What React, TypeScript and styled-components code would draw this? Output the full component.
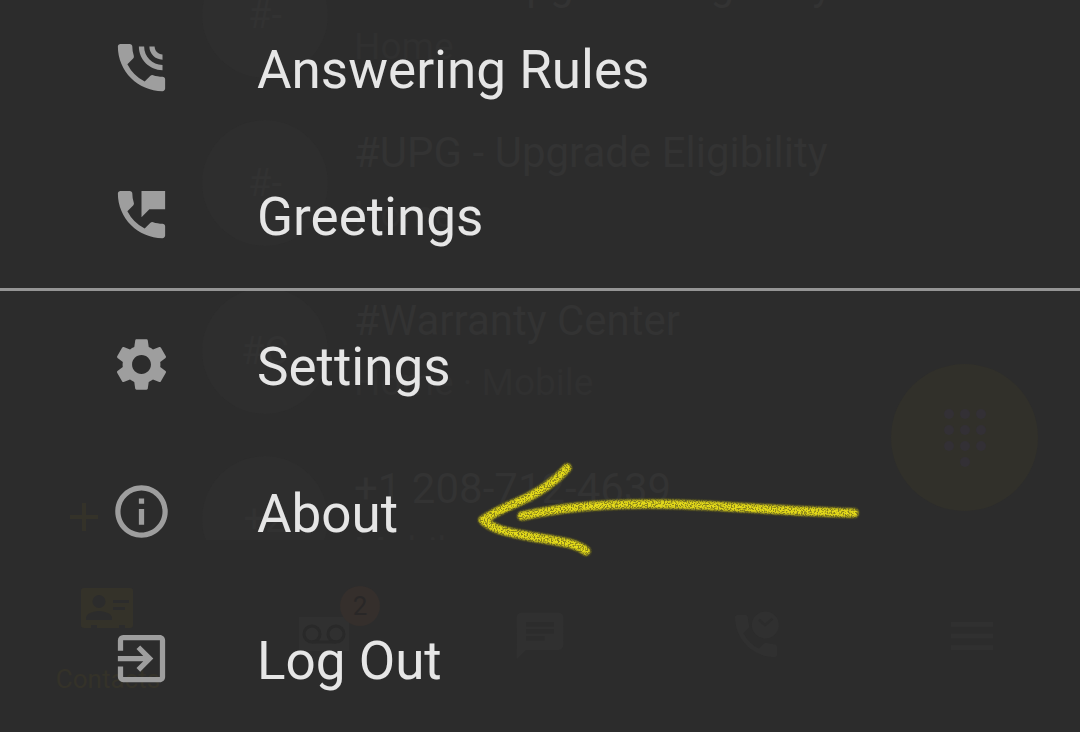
import React from "react";
import styled, { createGlobalStyle } from "styled-components";
import { MdSettings, MdInfoOutline, MdExitToApp, MdPermPhoneMsg, MdChat, MdMenu, MdAdd } from "react-icons/md";

const GlobalStyle = createGlobalStyle`
  body {
    margin: 0;
    background: #2c2c2c;
    font-family: Roboto, "Liberation Sans", sans-serif;
  }
  * { box-sizing: border-box; }
`;

const Screen = styled.div`
  display: grid;
  grid-template: 100vh / 100%;
  position: relative;
  overflow: hidden;
  background: #2c2c2c;
  color: #e6e6e6;
`;

/* The contacts page that shows faintly through the open menu. */
const Backdrop = styled.div`
  grid-area: 1 / 1;
  position: relative;
  display: flex;
  flex-direction: column;
  min-height: 0;
  overflow: hidden;
  color: #323232;
`;

const ContactList = styled.ul`
  flex: 1;
  min-height: 0;
  display: flex;
  flex-direction: column;
  margin: 0;
  padding: 0;
  list-style: none;
  overflow: hidden;
`;

const Contact = styled.li`
  flex: none;
  display: flex;
  align-items: center;
  gap: 26px;
  height: 168px;
  padding-left: 202px;

  &:first-child {
    margin-top: -69px;
  }
`;

const Avatar = styled.span`
  flex: none;
  display: grid;
  place-items: center;
  width: 126px;
  height: 126px;
  border-radius: 50%;
  background: #2e2e2e;
  color: #323232;
  font-size: 38px;
`;

const ContactText = styled.div`
  display: flex;
  flex-direction: column;
  gap: 16px;
`;

const ContactName = styled.span`
  font-size: 42px;
  line-height: 48px;
  color: #333333;
`;

const ContactKind = styled.span`
  font-size: 37px;
  line-height: 44px;
  color: #303030;
`;

const AddMark = styled(MdAdd)`
  position: absolute;
  left: 60px;
  bottom: 191px;
  width: 48px;
  height: 48px;
  color: #343229;
`;

const DialButton = styled.button`
  position: absolute;
  right: 42px;
  bottom: 221px;
  display: grid;
  place-items: center;
  width: 147px;
  height: 147px;
  padding: 0;
  border: 0;
  border-radius: 50%;
  background: #31302a;

  svg {
    width: 60px;
    height: 60px;
    fill: #333035;
  }
`;

const TabBar = styled.nav`
  flex: none;
  display: grid;
  grid-template-columns: repeat(5, 1fr);
  height: 192px;
`;

const Tab = styled.button<{ $active?: boolean }>`
  display: flex;
  flex-direction: column;
  align-items: center;
  justify-content: ${(p) => (p.$active ? "flex-start" : "center")};
  gap: 28px;
  padding: ${(p) => (p.$active ? "40px 0 0" : "0")};
  border: 0;
  background: none;
  color: ${(p) => (p.$active ? "#343229" : "#303030")};
  font: 400 26px/30px Roboto, "Liberation Sans", sans-serif;
`;

const TabIcon = styled.span`
  position: relative;
  display: flex;

  svg {
    width: 56px;
    height: 56px;
    fill: currentColor;
  }
`;

const Badge = styled.span`
  position: absolute;
  top: -22px;
  right: -28px;
  width: 40px;
  height: 40px;
  border-radius: 50%;
  background: #352f2c;
  color: #292727;
  font-size: 26px;
  line-height: 40px;
  text-align: center;
`;

const Menu = styled.nav`
  grid-area: 1 / 1;
  z-index: 1;
  align-self: end;
  display: flex;
  flex-direction: column;
`;

const Divider = styled.hr`
  width: 100%;
  height: 3px;
  margin: 0;
  border: 0;
  background: #959595;
`;

const MenuItem = styled.button`
  display: flex;
  align-items: center;
  gap: 84px;
  width: 100%;
  height: 147px;
  padding: 0 0 0 110px;
  border: 0;
  background: none;
  color: inherit;
  font: 400 53px/64px Roboto, "Liberation Sans", sans-serif;
  text-align: left;

  svg {
    flex: none;
    width: 63px;
    height: 63px;
    fill: #9e9e9e;
  }
`;

const MenuLabel = styled.span`
  padding-top: 4px;
`;

const Arrow = styled.svg`
  position: absolute;
  left: 470px;
  bottom: 172px;
  z-index: 2;
  width: 400px;
  height: 110px;
  pointer-events: none;
`;

const handset =
  "M20 15.5c-1.25 0-2.45-.2-3.57-.57a1.02 1.02 0 0 0-1.02.24l-2.2 2.2a15.045 15.045 0 0 1-6.59-6.59l2.2-2.21a.96.96 0 0 0 .25-1A11.36 11.36 0 0 1 8.5 4c0-.55-.45-1-1-1H4c-.55 0-1 .45-1 1 0 9.39 7.61 17 17 17 .55 0 1-.45 1-1v-3.5c0-.55-.45-1-1-1z";

const PhoneWaves = () => (
  <svg viewBox="0 0 24 24" aria-hidden="true">
    <path d={handset} />
    <path d="M11 4c0 4.97 4.03 9 9 9v-2c-3.87 0-7-3.13-7-7zM15 4c0 2.76 2.24 5 5 5V7c-1.66 0-3-1.34-3-3z" />
  </svg>
);

const ContactCard = () => (
  <svg viewBox="0 0 56 56" aria-hidden="true">
    <path
      fillRule="evenodd"
      d="M4 8h46a3 3 0 0 1 3 3v34a3 3 0 0 1-3 3h-5v-3h-6v3H17v-3h-6v3H4a3 3 0 0 1-3-3V11a3 3 0 0 1 3-3zM19 15a6 6 0 1 0 0 13a6 6 0 1 0 0-13zM6 40h26v-2c0-5-9-7-13-7S6 33 6 38zM33 20v3h16v-3zM33 27v3h12v-3z"
    />
  </svg>
);

const Voicemail = () => (
  <svg viewBox="0 0 56 56" aria-hidden="true">
    <path d="M3 9h50v34H3z" />
    <g fill="none" stroke="#292929" strokeWidth="3">
      <circle cx="16" cy="26" r="8" />
      <circle cx="40" cy="26" r="8" />
      <path d="M16 34h24" />
    </g>
  </svg>
);

const RecentCalls = () => (
  <svg viewBox="0 0 24 24" aria-hidden="true">
    <path d={handset} />
    <path
      fillRule="evenodd"
      d="M16 1.500a5.800 5.800 0 1 0 0 11.600a5.800 5.800 0 1 0 0-11.600zM13.600 4.600l2.200 2 3-2.400.6.800-3.600 3-2.900-2.600z"
    />
  </svg>
);

const dialDots = [
  [14, 6], [30, 6], [46, 6],
  [14, 22], [30, 22], [46, 22],
  [14, 38], [30, 38], [46, 38],
  [30, 54],
];

const Dialpad = () => (
  <svg viewBox="0 0 60 60" aria-hidden="true">
    {dialDots.map(([x, y]) => (
      <circle key={`${x}-${y}`} cx={x} cy={y} r="5" />
    ))}
  </svg>
);

const ArrowStrokes = () => (
  <>
    <path d="M97 18C84 33 66 44 48 52C34 58 22 64 13 70C22 79 37 82 53 85C76 90 104 91 116 101" />
    <path d="M52 66C90 58 125 54 180 54C245 54 300 61 384 63" />
  </>
);

const contacts = [
  { mark: "#-", name: "#PMT - Upgrade Eligibility", kind: "Home" },
  { mark: "#-", name: "#UPG - Upgrade Eligibility", kind: "Home" },
  { mark: "#C", name: "#Warranty Center", kind: "Home · Mobile" },
  { mark: "+2", name: "+1 208-712-4639", kind: "Mobile" },
];

export default function App() {
  return (
    <>
      <GlobalStyle />
      <Screen>
        <Backdrop aria-hidden="true">
          <ContactList>
            {contacts.map((c) => (
              <Contact key={c.name}>
                <Avatar>{c.mark}</Avatar>
                <ContactText>
                  <ContactName>{c.name}</ContactName>
                  <ContactKind>{c.kind}</ContactKind>
                </ContactText>
              </Contact>
            ))}
          </ContactList>
          <AddMark />
          <DialButton tabIndex={-1}>
            <Dialpad />
          </DialButton>
          <TabBar>
            <Tab $active tabIndex={-1}>
              <TabIcon><ContactCard /></TabIcon>
              Contacts
            </Tab>
            <Tab tabIndex={-1}>
              <TabIcon>
                <Voicemail />
                <Badge>2</Badge>
              </TabIcon>
            </Tab>
            <Tab tabIndex={-1}><TabIcon><MdChat /></TabIcon></Tab>
            <Tab tabIndex={-1}><TabIcon><RecentCalls /></TabIcon></Tab>
            <Tab tabIndex={-1}><TabIcon><MdMenu /></TabIcon></Tab>
          </TabBar>
        </Backdrop>

        <Menu aria-label="Main menu">
          <MenuItem><PhoneWaves /><MenuLabel>Answering Rules</MenuLabel></MenuItem>
          <MenuItem><MdPermPhoneMsg /><MenuLabel>Greetings</MenuLabel></MenuItem>
          <Divider />
          <MenuItem><MdSettings /><MenuLabel>Settings</MenuLabel></MenuItem>
          <MenuItem><MdInfoOutline /><MenuLabel>About</MenuLabel></MenuItem>
          <MenuItem><MdExitToApp /><MenuLabel>Log Out</MenuLabel></MenuItem>
        </Menu>

        <Arrow viewBox="0 0 400 110" aria-hidden="true">
          <defs>
            <filter id="soft" x="-5%" y="-20%" width="110%" height="140%">
              <feGaussianBlur stdDeviation="1" />
            </filter>
            <filter id="crayon" x="-5%" y="-20%" width="110%" height="140%" colorInterpolationFilters="sRGB">
              <feGaussianBlur in="SourceGraphic" stdDeviation="1" result="soft" />
              <feTurbulence type="fractalNoise" baseFrequency="0.7" numOctaves="2" seed="4" result="noise" />
              <feColorMatrix in="noise" type="matrix" values="0 0 0 0 0  0 0 0 0 0  0 0 0 0 0  0 0 0 6 -2.2" result="grain" />
              <feComposite in="soft" in2="grain" operator="in" />
            </filter>
          </defs>
          <g fill="none" strokeLinecap="round" strokeLinejoin="round">
            <g stroke="#8a841c" strokeWidth="9" filter="url(#soft)">
              <ArrowStrokes />
            </g>
            <g stroke="#e4da1a" strokeWidth="8" filter="url(#crayon)">
              <ArrowStrokes />
            </g>
          </g>
        </Arrow>
      </Screen>
    </>
  );
}
